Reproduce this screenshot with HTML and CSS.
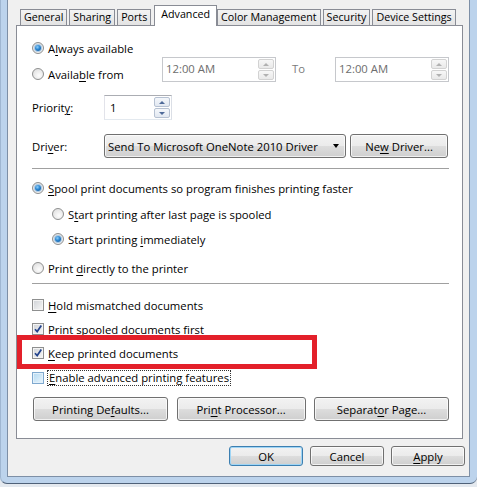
FILE: index.html
```html
<!DOCTYPE html>
<html>
<head>
<meta charset="utf-8">
<link rel="stylesheet" href="styles.css">
</head>
<body>
<div class="window">
  <div class="dialog">
    <div class="tabs">
      <div class="tab">General</div>
      <div class="tab">Sharing</div>
      <div class="tab pre">Ports</div>
      <div class="tab active">Advanced</div>
      <div class="tab">Color Management</div>
      <div class="tab">Security</div>
      <div class="tab">Device Settings</div>
    </div>
    <div class="panel">
      <div class="row r1"><span class="radio on"></span><span>A<u>l</u>ways available</span></div>
      <div class="row r2">
        <div class="from-label"><span class="radio"></span><span>Availa<u>b</u>le from</span></div>
        <div class="spin time disabled"><span class="val">12:00 AM</span><span class="spinbtns"><span class="sb up"></span><span class="sb down"></span></span></div>
        <span class="to">To</span>
        <div class="spin time disabled"><span class="val">12:00 AM</span><span class="spinbtns"><span class="sb up"></span><span class="sb down"></span></span></div>
      </div>
      <div class="row r3">
        <span class="label">Priorit<u>y</u>:</span>
        <div class="spin prio"><span class="val">1</span><span class="spinbtns"><span class="sb up"></span><span class="sb down"></span></span></div>
      </div>
      <div class="row r4">
        <span class="label">Dri<u>v</u>er:</span>
        <div class="combo"><span>Send To Microsoft OneNote 2010 Driver</span><span class="arrow"></span></div>
        <div class="btn newdrv"><span>Ne<u>w</u> Driver...</span></div>
      </div>
      <div class="sep s1"></div>
      <div class="row r5"><span class="radio on"></span><span><u>S</u>pool print documents so program finishes printing faster</span></div>
      <div class="row r6 sub"><span class="radio"></span><span>S<u>t</u>art printing after last page is spooled</span></div>
      <div class="row r7 sub"><span class="radio on"></span><span>Start printing <u>i</u>mmediately</span></div>
      <div class="row r8"><span class="radio"></span><span>Print <u>d</u>irectly to the printer</span></div>
      <div class="sep s2"></div>
      <div class="row r9"><span class="check"></span><span><u>H</u>old mismatched documents</span></div>
      <div class="row r10"><span class="check on"><svg viewBox="0 0 10 10" width="10" height="10"><path d="M2 5.2 L4.2 7.6 L8.3 1.6" fill="none" stroke="#22428c" stroke-width="1.7"/></svg></span><span>Print s<u>p</u>ooled documents first</span></div>
      <div class="row r11"><span class="check on"><svg viewBox="0 0 10 10" width="10" height="10"><path d="M2 5.2 L4.2 7.6 L8.3 1.6" fill="none" stroke="#22428c" stroke-width="1.7"/></svg></span><span><u>K</u>eep printed documents</span></div>
      <div class="row r12"><span class="check hover"></span><span class="focus"><u>E</u>nable advanced printing features</span></div>
      <div class="btnrow">
        <div class="btn"><span>Printing De<u>f</u>aults...</span></div>
        <div class="btn"><span>Pri<u>n</u>t Processor...</span></div>
        <div class="btn"><span>Separat<u>o</u>r Page...</span></div>
      </div>
    </div>
    <div class="footer">
      <div class="btn fbtn default"><span>OK</span></div>
      <div class="btn fbtn"><span>Cancel</span></div>
      <div class="btn fbtn"><span><u>A</u>pply</span></div>
    </div>
  </div>
</div>
<div class="highlight"></div>
</body>
</html>
```
FILE: styles.css
```css
* { box-sizing: border-box; }
html, body { margin: 0; padding: 0; }
body {
  width: 477px;
  height: 487px;
  overflow: hidden;
  position: relative;
  background: #e4e9ef;
  font-family: "Open Sans", "Noto Sans", sans-serif;
  font-size: 11.3px;
  color: #000;
}
u { text-decoration-thickness: 1px; text-underline-offset: 2px; }

.window {
  height: 484px;
  background: #bcd3ec;
  padding: 0 7px 6px 6px;
  border-bottom: 1px solid #4f6178;
  border-left: 1px solid #9fb6d1;
  border-radius: 0 0 7px 7px;
}
.dialog {
  height: 477px;
  background: #f0f0f0;
  border: 1px solid #7d8fa6;
  border-top: none;
  padding: 5px 6px 0 8px;
  display: flex;
  flex-direction: column;
}

/* tabs */
.tabs {
  display: flex;
  align-items: flex-end;
  height: 21px;
  margin: 0 0 -1px 4px;
  position: relative;
  z-index: 2;
  font-size: 10.7px;
}
.tab {
  height: 16px;
  margin: 0 2px 1px 0;
  padding: 0 3px;
  border: 1px solid #898c95;
  border-bottom: none;
  background: linear-gradient(#f3f3f3, #e3e3e3);
  line-height: 14px;
  white-space: nowrap;
}
.tab.pre { margin-right: 3px; }
.tab.active {
  height: 21px;
  margin: 0;
  padding: 0 6px;
  background: #fff;
  line-height: 16px;
}

/* panel */
.panel {
  height: 414px;
  background: #fff;
  border: 1px solid #898c95;
  padding: 13px 13px 0 15px;
  display: flex;
  flex-direction: column;
}
.row {
  display: flex;
  align-items: center;
  height: 18px;
  white-space: nowrap;
  flex: none;
}
.sub { padding-left: 20px; }

.radio {
  width: 12px;
  height: 12px;
  border-radius: 50%;
  border: 1px solid #8e8f8f;
  background: radial-gradient(circle at 60% 65%, #fdfdfd 0%, #e4e4e4 70%, #d0d0d0 100%);
  margin-right: 4px;
  flex: none;
  display: flex;
  align-items: center;
  justify-content: center;
}
.radio.on::after {
  content: "";
  width: 6px;
  height: 6px;
  border-radius: 50%;
  background: radial-gradient(circle at 40% 35%, #8ed0fb 0%, #2a85d0 45%, #0b4d8f 100%);
  box-shadow: 0 0 0 1px #a8c8e4;
}
.check {
  width: 12px;
  height: 12px;
  border: 1px solid #8e8f8f;
  background: linear-gradient(135deg, #cfd2d6, #f7f7f7);
  box-shadow: inset 0 0 0 1px #f4f4f4;
  margin-right: 4px;
  flex: none;
  display: flex;
  align-items: center;
  justify-content: center;
}
.check.hover {
  border-color: #7fa9cf;
  background: linear-gradient(135deg, #b4d9f1, #e8f5fd);
  box-shadow: inset 0 0 0 1px #e3f1fb;
}
.check svg { display: block; }
.focus { outline: 1px dotted #333; outline-offset: 0; padding: 0 1px; line-height: 14px; }

/* row 2 */
.r2 { height: 25px; align-items: flex-start; }
.from-label { display: flex; align-items: center; width: 130px; height: 18px; margin-top: 8px; }
.spin {
  display: flex;
  align-items: center;
  justify-content: space-between;
  height: 25px;
  border: 1px solid #c6c8cc;
  background: #fff;
  padding: 1px 1px 1px 3px;
}
.spin.time { width: 114px; color: #6d6d6d; }
.to { width: 59px; text-align: left; padding-left: 16px; color: #7b7b7b; margin-top: 4px; }
.spinbtns { display: flex; flex-direction: column; gap: 1px; width: 16px; height: 21px; }
.sb {
  flex: 1;
  border: 1px solid #d2d2d2;
  border-radius: 2px;
  background: linear-gradient(#f7f7f7, #e9e9e9);
  display: flex;
  align-items: center;
  justify-content: center;
}
.sb::after {
  content: "";
  width: 0; height: 0;
  border-left: 3px solid transparent;
  border-right: 3px solid transparent;
}
.sb.up::after { border-bottom: 3px solid #b1b1b1; }
.sb.down::after { border-top: 3px solid #b1b1b1; }
.spin.time .val { margin-top: -3px; }

/* row 3 */
.r3 { height: 25px; margin-top: 13px; }
.label { width: 72px; }
.spin.prio {
  width: 68px;
  border-color: #abadb3 #dbdfe6 #e3e9ef #e2e3ea;
  padding-left: 5px;
}
.spin.prio .sb { border-color: #b6c1d2; background: linear-gradient(#f4f7fb, #e2e8f1); }
.spin.prio .sb.up::after { border-bottom-color: #4e6a99; }
.spin.prio .sb.down::after { border-top-color: #4e6a99; }

/* row 4 */
.r4 { height: 24px; margin-top: 14px; }
.btn {
  border: 1px solid #707070;
  border-radius: 3px;
  background: linear-gradient(#f2f2f2 0%, #ebebeb 50%, #dddddd 50%, #cfcfcf 100%);
  box-shadow: inset 0 0 0 1px rgba(255,255,255,0.7);
  display: flex;
  align-items: center;
  justify-content: center;
  white-space: nowrap;
}
.combo {
  width: 242px;
  height: 24px;
  justify-content: space-between;
  padding: 0 6px 0 3px;
  border: 1px solid #707070;
  border-radius: 3px;
  background: linear-gradient(#f2f2f2 0%, #ebebeb 50%, #dddddd 50%, #cfcfcf 100%);
  box-shadow: inset 0 0 0 1px rgba(255,255,255,0.7);
  display: flex;
  align-items: center;
}
.arrow {
  width: 0; height: 0;
  border-left: 3.5px solid transparent;
  border-right: 3.5px solid transparent;
  border-top: 4px solid #000;
}
.newdrv { width: 98px; height: 24px; margin-left: 4px; }

.sep { height: 1px; background: #a0a0a0; flex: none; }
.s1 { margin-top: 10px; }
.s2 { margin-top: 6px; }
.r5 { margin-top: 10px; }
.r6 { margin-top: 8px; }
.r7 { margin-top: 7px; }
.r8 { margin-top: 11px; }
.r9 { margin-top: 12px; }
.r10 { margin-top: 6px; }
.r11 { margin-top: 6px; }
.r12 { margin-top: 7px; }

.btnrow {
  display: grid;
  grid-template-columns: 135px 129px 135px;
  justify-content: space-between;
  width: 416px;
  margin-left: 1px;
  margin-top: 10px;
  height: 24px;
}

/* footer */
.footer {
  display: flex;
  justify-content: flex-end;
  gap: 7px;
  margin: 7px -2px 0 0;
}
.fbtn { width: 74px; height: 20px; }
.fbtn.default {
  border-color: #3c7fb1;
  box-shadow: inset 0 0 0 1px #9fd5f5;
}

.highlight {
  position: absolute;
  left: 17px;
  top: 335px;
  width: 300px;
  height: 34px;
  border: 5px solid #e3202a;
}
```
